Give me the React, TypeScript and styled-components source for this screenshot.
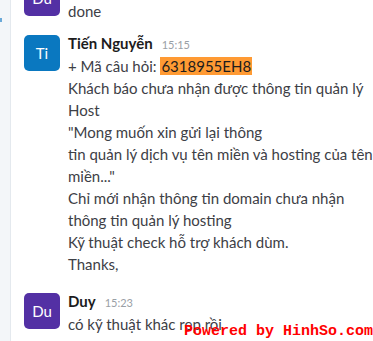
import styled, { createGlobalStyle } from "styled-components";

const GlobalStyle = createGlobalStyle`
  html, body {
    margin: 0;
    padding: 0;
    background: #fff;
  }
  body {
    font-family: Lato, "Noto Sans", sans-serif;
  }
`;

const Page = styled.div`
  display: flex;
  width: 373px;
  height: 341px;
  overflow: hidden;
  position: relative;
`;

const Rail = styled.div`
  width: 10px;
  flex-shrink: 0;
  background: #f3f6f9;
  border-right: 1px solid #e4e9ee;
  padding-top: 18px;
  .mark {
    width: 2px;
    height: 4px;
    background: #6aa9d8;
  }
`;

const Feed = styled.div`
  flex: 1;
  display: flex;
  flex-direction: column;
  justify-content: flex-end;
  padding: 0 0 6px 13px;
`;

const Message = styled.div<{ $space?: number }>`
  display: flex;
  gap: 8px;
  align-items: flex-start;
  margin-top: ${(p) => p.$space ?? 0}px;
`;

const Avatar = styled.div<{ $bg: string }>`
  width: 36px;
  height: 36px;
  flex-shrink: 0;
  border-radius: 5px;
  background: ${(p) => p.$bg};
  color: #fff;
  font-size: 15px;
  display: flex;
  align-items: center;
  justify-content: center;
  margin-top: 2px;
`;

const Content = styled.div`
  display: flex;
  flex-direction: column;
  min-width: 0;
`;

const Header = styled.div`
  display: flex;
  align-items: baseline;
  gap: 9px;
  line-height: 20px;
  h4 {
    margin: 0;
    font-size: 15px;
    font-weight: 700;
    color: #1d1c1d;
  }
  span {
    font-size: 11px;
    color: #9aa0a6;
  }
`;

const Body = styled.div`
  font-size: 15px;
  line-height: 22px;
  color: #3d4046;
  white-space: pre-wrap;
  mark {
    background: #ff9a33;
    color: #1d1c1d;
    padding: 0 1px;
  }
`;

const Watermark = styled.div`
  position: absolute;
  right: 0;
  bottom: 1px;
  font-family: "Liberation Mono", monospace;
  font-weight: 700;
  font-size: 15px;
  line-height: 16px;
  color: #ff0000;
`;

export default function App() {
  return (
    <>
      <GlobalStyle />
      <Page>
        <Rail>
          <div className="mark" />
        </Rail>
        <Feed>
          <Message>
            <Avatar $bg="#5330a4">Du</Avatar>
            <Content>
              <Header>
                <h4>Duy</h4>
                <span>15:10</span>
              </Header>
              <Body>done</Body>
            </Content>
          </Message>
          <Message $space={11}>
            <Avatar $bg="#0a78c0">Ti</Avatar>
            <Content>
              <Header>
                <h4>Tiến Nguyễn</h4>
                <span>15:15</span>
              </Header>
              <Body>
                + Mã câu hỏi: <mark>6318955EH8</mark>
                {"\n"}Khách báo chưa nhận được thông tin quản lý Host
                {"\n"}"Mong muốn xin gửi lại thông
                {"\n"}tin quản lý dịch vụ tên miền và hosting của tên miền..."
                {"\n"}Chỉ mới nhận thông tin domain chưa nhận thông tin quản lý hosting
                {"\n"}Kỹ thuật check hỗ trợ khách dùm.
                {"\n"}Thanks,
              </Body>
            </Content>
          </Message>
          <Message $space={16}>
            <Avatar $bg="#5330a4">Du</Avatar>
            <Content>
              <Header>
                <h4>Duy</h4>
                <span>15:23</span>
              </Header>
              <Body>có kỹ thuật khác rep rồi</Body>
            </Content>
          </Message>
        </Feed>
        <Watermark>Powered by HinhSo.com</Watermark>
      </Page>
    </>
  );
}
